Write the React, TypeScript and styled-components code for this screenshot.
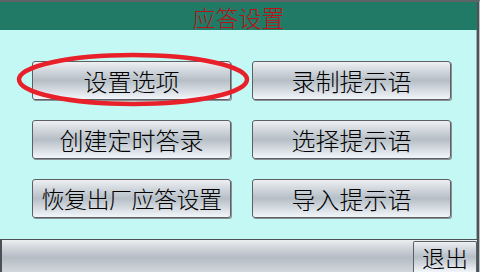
import React from 'react'
import styled, { createGlobalStyle } from 'styled-components'

const GlobalStyle = createGlobalStyle`
  html, body {
    margin: 0;
    padding: 0;
    background: #c4f8f4;
  }
  body {
    font-family: "Noto Sans CJK SC", "Noto Sans", sans-serif;
  }
`

const Screen = styled.div`
  width: 480px;
  height: 272px;
  box-sizing: border-box;
  display: flex;
  flex-direction: column;
  background: #c4f8f4;
  border-top: 2px solid #5c6468;
  border-right: 1px solid #b8c0c4;
`

const Frame = styled.div`
  flex: 1;
  display: flex;
  flex-direction: column;
  border-right: 2px solid #4c5458;
  box-shadow: inset -1px 0 0 #a4acb0;
  min-height: 0;
`

const TitleBar = styled.div`
  height: 28px;
  box-sizing: border-box;
  padding-top: 2px;
  background: #207a66;
  display: flex;
  align-items: center;
  justify-content: center;
  color: #b81414;
  font-size: 23px;
  font-weight: 300;
  line-height: 1;
`

const Content = styled.div`
  flex: 1;
  display: grid;
  grid-template-columns: 199px 199px;
  grid-auto-rows: 39px;
  column-gap: 21px;
  row-gap: 20px;
  padding: 31px 0 0 32px;
`

const Cell = styled.div`
  position: relative;
`

const Button = styled.button<{ $wide?: boolean }>`
  width: 100%;
  height: 100%;
  box-sizing: border-box;
  border: 1px solid #5c6064;
  border-radius: 3px;
  background: linear-gradient(
    to bottom,
    #eef0f2 0%,
    #d0d6dc 25%,
    #b6bec6 50%,
    #d4dae0 75%,
    #f2f6fa 100%
  );
  box-shadow: 1px 1px 0 #8a9096;
  font-family: "Noto Sans CJK SC", "Noto Sans", sans-serif;
  font-size: ${p => (p.$wide ? '23px' : '24px')};
  font-weight: 300;
  letter-spacing: ${p => (p.$wide ? '-0.5px' : '0')};
  color: #000;
  padding: 0;
  white-space: nowrap;
  line-height: 1;
`

const Highlight = styled.svg`
  position: absolute;
  left: -16px;
  top: -9px;
  width: 238px;
  height: 55px;
  pointer-events: none;
`

const BottomBar = styled.div`
  height: 33px;
  box-sizing: border-box;
  border-top: 1px solid #4c5054;
  border-left: 2px solid #4c5054;
  background: linear-gradient(
    to bottom,
    #eceef0 0%,
    #c6ccd2 35%,
    #b4bcc4 55%,
    #d0d6dc 100%
  );
  display: flex;
  justify-content: flex-end;
  padding: 1px 0 0 0;
`

const ExitButton = styled(Button)`
  width: 64px;
  height: 31px;
  border-radius: 2px 2px 0 0;
  border-bottom: none;
  box-shadow: none;
  font-size: 23px;
`

const items = ['设置选项', '录制提示语', '创建定时答录', '选择提示语', '恢复出厂应答设置', '导入提示语']

export default function App() {
  return (
    <>
      <GlobalStyle />
      <Screen>
        <Frame>
          <TitleBar>应答设置</TitleBar>
          <Content>
            {items.map((label, i) => (
              <Cell key={label}>
                <Button $wide={label.length > 6}>{label}</Button>
                {i === 0 && (
                  <Highlight viewBox="0 0 238 55">
                    <ellipse cx="117" cy="27.5" rx="114" ry="24.5" fill="none" stroke="#e8202a" strokeWidth="4.5" />
                  </Highlight>
                )}
              </Cell>
            ))}
          </Content>
          <BottomBar>
            <ExitButton>退出</ExitButton>
          </BottomBar>
        </Frame>
      </Screen>
    </>
  )
}
